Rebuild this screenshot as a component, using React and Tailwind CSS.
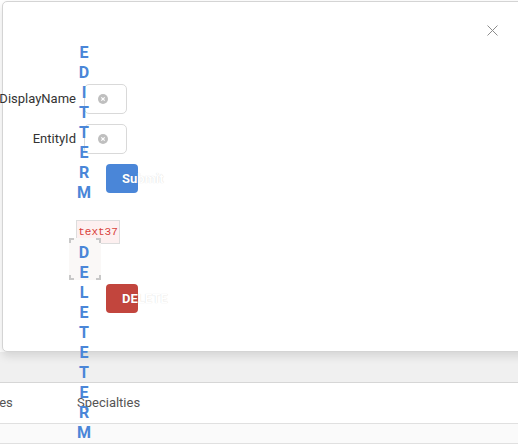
import React from 'react'

const FONT = "font-['Roboto','Liberation_Sans',sans-serif]"

function ClearIcon() {
  return (
    <svg width="10" height="10" viewBox="0 0 10 10">
      <circle cx="5" cy="5" r="5" fill="#bfbfbf" />
      <path d="M3.3 3.3 L6.7 6.7 M6.7 3.3 L3.3 6.7" stroke="#fff" strokeWidth="1.2" />
    </svg>
  )
}

function Field({ label }) {
  return (
    <div className="flex items-center">
      <div className="w-[73px] flex justify-end text-[13px] text-[#333] whitespace-nowrap">
        <span>{label}</span>
      </div>
      <div className="ml-[8px] w-[43px] h-[30px] rounded-[5px] border border-[#d9d9d9] bg-white flex items-center pl-[13px]">
        <ClearIcon />
      </div>
    </div>
  )
}

function VerticalWord({ word }) {
  return (
    <div className="w-[14px] break-all text-center leading-[20px] text-[16px] font-bold text-[#4a86d8]">
      {word}
    </div>
  )
}

export default function App() {
  return (
    <div className={`relative w-[518px] h-[444px] overflow-hidden bg-white ${FONT}`}>
      {/* page behind the modal */}
      <div className="h-[352px]" />
      <div className="h-[31px] bg-[#f0f0f0] border-b border-[#d6d6d6]" />
      <div className="h-[41px] flex items-center border-b border-[#e0e0e0] text-[13px] text-[#555]">
        <div className="w-[81px] -ml-[4px]">ies</div>
        <div>Specialties</div>
      </div>
      <div className="h-[20px] bg-[#fafafa] border-b border-[#e0e0e0]" />

      {/* modal */}
      <div className="absolute left-[2px] top-[1px] w-[580px] h-[351px] bg-white border border-[#d4d4d4] rounded-[5px] shadow-[0_4px_10px_rgba(0,0,0,0.12)]">
        <button className="absolute left-[483px] top-[22px] w-[12px] h-[12px] flex items-center justify-center">
          <svg width="11" height="11" viewBox="0 0 11 11">
            <path d="M0.5 0.5 L10.5 10.5 M10.5 0.5 L0.5 10.5" stroke="#8c8c8c" strokeWidth="1" />
          </svg>
        </button>

        <div className="pt-[82px] flex flex-col">
          <Field label="DisplayName" />
          <div className="mt-[10px]">
            <Field label="EntityId" />
          </div>
          <button className="mt-[10px] ml-[103px] w-[32px] h-[29px] rounded-[4px] bg-[#4a86d8] text-left pl-[16px] text-[13px] font-bold text-white whitespace-nowrap [text-shadow:0_0_1px_rgba(0,0,0,0.18)]">
            Submit
          </button>
          <div className="mt-[27px] ml-[73px] w-[44px] h-[24px] bg-[#fdf0f0] border border-[#ddd] flex items-center justify-center font-['Liberation_Mono',monospace] text-[11px] text-[#d8413a]">
            text37
          </div>
          <div className="-mt-[6px] ml-[66px] w-[32px] h-[42px] relative bg-[#faf8f7]">
            <span className="absolute left-0 top-0 w-[5px] h-[5px] border-l-2 border-t-2 border-[#c8c8c8]" />
            <span className="absolute right-0 top-0 w-[5px] h-[5px] border-r-2 border-t-2 border-[#c8c8c8]" />
            <span className="absolute left-0 bottom-0 w-[5px] h-[5px] border-l-2 border-b-2 border-[#c8c8c8]" />
            <span className="absolute right-0 bottom-0 w-[5px] h-[5px] border-r-2 border-b-2 border-[#c8c8c8]" />
          </div>
          <button className="mt-[4px] ml-[103px] w-[32px] h-[29px] rounded-[4px] bg-[#c2453d] text-left pl-[16px] text-[13px] font-bold text-white whitespace-nowrap [text-shadow:0_0_1px_rgba(0,0,0,0.18)]">
            DELETE
          </button>
        </div>
      </div>

      {/* overflowing vertical labels */}
      <div className="absolute left-[77px] top-[43px]">
        <VerticalWord word="EDITTERM" />
      </div>
      <div className="absolute left-[77px] top-[243px]">
        <VerticalWord word="DELETETERM" />
      </div>
    </div>
  )
}
